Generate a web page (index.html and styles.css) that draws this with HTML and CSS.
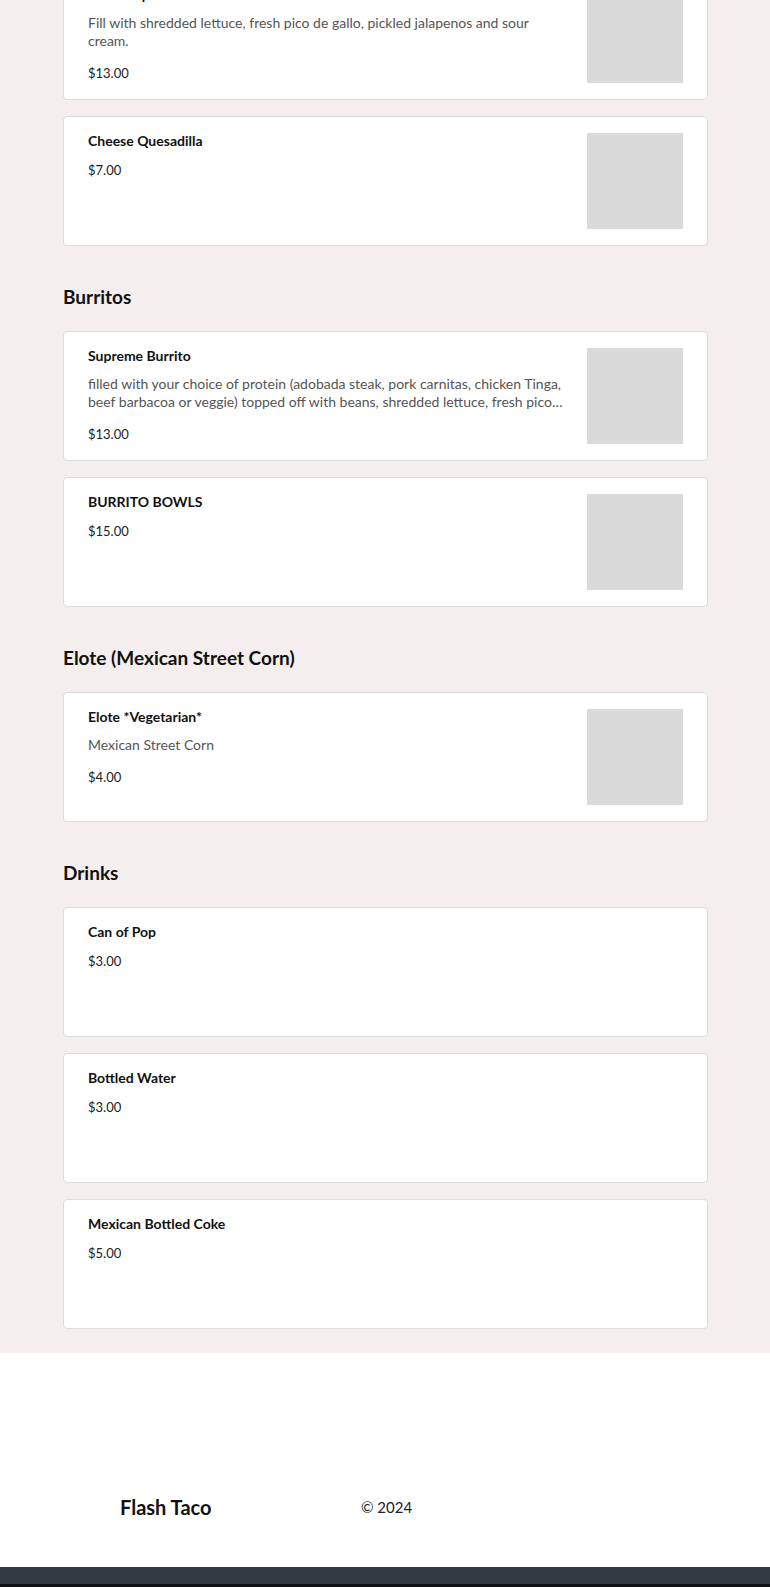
FILE: index.html
```html
<!DOCTYPE html>
<html lang="en">
<head>
<meta charset="utf-8">
<title>Flash Taco - Menu</title>
<link rel="stylesheet" href="styles.css">
</head>
<body>
<main class="menu">
  <section class="section">
    <h2 class="section-title">Tacos</h2>
    <div class="items">
      <div class="card">
        <div class="info">
          <h3 class="name">Tacos Supreme</h3>
          <p class="desc">Fill with shredded lettuce, fresh pico de gallo, pickled jalapenos and sour cream.</p>
          <p class="price">$13.00</p>
        </div>
        <div class="thumb"></div>
      </div>
      <div class="card">
        <div class="info">
          <h3 class="name">Cheese Quesadilla</h3>
          <p class="price">$7.00</p>
        </div>
        <div class="thumb"></div>
      </div>
    </div>
  </section>

  <section class="section">
    <h2 class="section-title">Burritos</h2>
    <div class="items">
      <div class="card">
        <div class="info">
          <h3 class="name">Supreme Burrito</h3>
          <p class="desc">filled with your choice of protein (adobada steak, pork carnitas, chicken Tinga, beef barbacoa or veggie) topped off with beans, shredded lettuce, fresh pico de gallo, rice and sour cream.</p>
          <p class="price">$13.00</p>
        </div>
        <div class="thumb"></div>
      </div>
      <div class="card">
        <div class="info">
          <h3 class="name">BURRITO BOWLS</h3>
          <p class="price">$15.00</p>
        </div>
        <div class="thumb"></div>
      </div>
    </div>
  </section>

  <section class="section">
    <h2 class="section-title">Elote (Mexican Street Corn)</h2>
    <div class="items">
      <div class="card">
        <div class="info">
          <h3 class="name">Elote *Vegetarian*</h3>
          <p class="desc">Mexican Street Corn</p>
          <p class="price">$4.00</p>
        </div>
        <div class="thumb"></div>
      </div>
    </div>
  </section>

  <section class="section">
    <h2 class="section-title">Drinks</h2>
    <div class="items">
      <div class="card">
        <div class="info">
          <h3 class="name">Can of Pop</h3>
          <p class="price">$3.00</p>
        </div>
      </div>
      <div class="card">
        <div class="info">
          <h3 class="name">Bottled Water</h3>
          <p class="price">$3.00</p>
        </div>
      </div>
      <div class="card">
        <div class="info">
          <h3 class="name">Mexican Bottled Coke</h3>
          <p class="price">$5.00</p>
        </div>
      </div>
    </div>
  </section>
</main>

<footer class="footer">
  <div class="footer-inner">
    <div class="brand">Flash Taco</div>
    <div class="copy">© 2024</div>
  </div>
</footer>
<div class="bottom-bar"></div>
<div class="bottom-edge"></div>
</body>
</html>
```

FILE: styles.css
```css
* {
  box-sizing: border-box;
}

html, body {
  margin: 0;
  padding: 0;
}

body {
  background: #f4efee;
  color: #111;
  font-family: "Lato", "Liberation Sans", sans-serif;
}

.menu {
  margin-top: -78px;
  padding: 0 62px 24px 63px;
  background: #f4efee;
}

.section + .section {
  margin-top: 37px;
}

.section-title {
  margin: 0 0 20px;
  font-size: 19px;
  line-height: 28px;
  font-weight: 700;
  color: #111;
}

.items {
  display: flex;
  flex-direction: column;
  gap: 16px;
}

.card {
  display: flex;
  gap: 17px;
  min-height: 130px;
  padding: 16px 24px;
  background: #fff;
  border: 1px solid #dcdcdc;
  border-radius: 4px;
}

.info {
  flex: 1;
  min-width: 0;
}

.name {
  margin: 0 0 11px;
  font-size: 14px;
  line-height: 16px;
  font-weight: 700;
  color: #111;
}

.desc {
  margin: 0 0 13px;
  font-size: 14px;
  line-height: 18px;
  color: #555;
  display: -webkit-box;
  -webkit-line-clamp: 2;
  -webkit-box-orient: vertical;
  overflow: hidden;
}

.price {
  margin: 0;
  font-size: 13px;
  line-height: 20px;
  color: #222;
}

.thumb {
  flex: 0 0 96px;
  width: 96px;
  height: 96px;
  background: #dadada;
}

.footer {
  background: #fff;
  padding: 140px 0 46px 120px;
}

.footer-inner {
  display: grid;
  grid-template-columns: 241px auto;
  align-items: center;
}

.brand {
  font-size: 20px;
  line-height: 28px;
  font-weight: 700;
  color: #111;
}

.copy {
  font-size: 15px;
  line-height: 28px;
  color: #222;
}

.bottom-bar {
  height: 17px;
  background: #343a44;
}

.bottom-edge {
  height: 3px;
  background: #0d0f12;
}
```
